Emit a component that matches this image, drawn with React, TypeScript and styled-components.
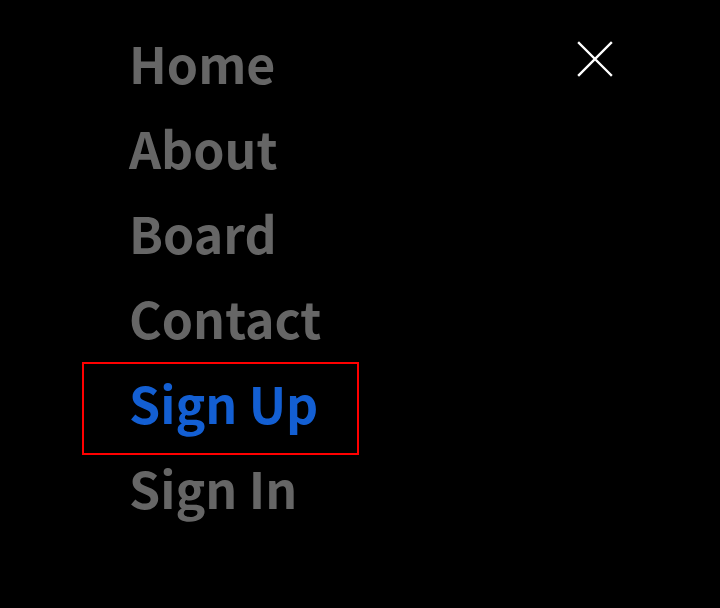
import React from "react";
import styled, { createGlobalStyle } from "styled-components";

const GlobalStyle = createGlobalStyle`
  html, body {
    margin: 0;
    padding: 0;
    background: #000;
  }
  body {
    font-family: "Noto Sans CJK SC", "Source Sans Pro", "Open Sans", sans-serif;
  }
`;

const Overlay = styled.div`
  position: relative;
  width: 720px;
  height: 608px;
  background: #000;
  overflow: hidden;
`;

const NavList = styled.ul`
  list-style: none;
  margin: 0;
  padding: 20px 0 0 82px;
  display: flex;
  flex-direction: column;
  align-items: flex-start;
`;

const NavItem = styled.li`
  display: block;
`;

const NavLink = styled.a<{ $active?: boolean }>`
  position: relative;
  display: block;
  box-sizing: border-box;
  height: 85px;
  width: 276px;
  padding: 0 0 0 47px;
  font-size: 50px;
  font-weight: 700;
  line-height: 85px;
  color: ${(p) => (p.$active ? "#135fd3" : "#666666")};
  text-decoration: none;

  &::after {
    content: "";
    display: ${(p) => (p.$active ? "block" : "none")};
    position: absolute;
    left: 0;
    top: 2px;
    width: 277px;
    height: 93px;
    box-sizing: border-box;
    border: 2px solid #ff0000;
    pointer-events: none;
  }
`;

const CloseButton = styled.button`
  position: absolute;
  top: 40px;
  right: 106px;
  width: 38px;
  height: 38px;
  padding: 0;
  border: none;
  background: transparent;
  cursor: pointer;
  display: flex;
  align-items: center;
  justify-content: center;
`;

const links = ["Home", "About", "Board", "Contact", "Sign Up", "Sign In"];

export default function App() {
  return (
    <>
      <GlobalStyle />
      <Overlay>
        <CloseButton aria-label="Close menu">
          <svg width="38" height="38" viewBox="0 0 38 38">
            <path
              d="M3 3 L35 35 M35 3 L3 35"
              stroke="#fff"
              strokeWidth="2.4"
              strokeLinecap="square"
            />
          </svg>
        </CloseButton>
        <NavList>
          {links.map((l) => (
            <NavItem key={l}>
              <NavLink href="#" $active={l === "Sign Up"}>
                {l}
              </NavLink>
            </NavItem>
          ))}
        </NavList>
      </Overlay>
    </>
  );
}
